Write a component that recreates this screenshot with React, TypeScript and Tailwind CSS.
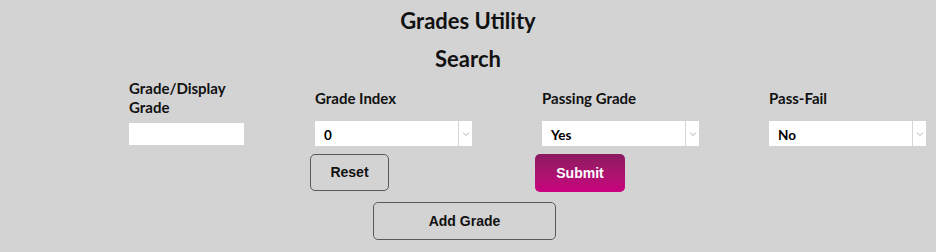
import React from 'react';

const Chevron = () => (
  <svg width="8" height="6" viewBox="0 0 8 6" fill="none" stroke="#b0b0b0" strokeWidth={1}>
    <path d="M1 1.5l3 3 3-3" />
  </svg>
);

const SelectBox = ({ value }: { value: string }) => (
  <div className="flex h-[25px] w-[157px] bg-white">
    <div className="flex flex-1 items-center pl-[9px] pt-[3px] text-[13.5px] font-bold text-black">{value}</div>
    <div className="flex w-[14px] items-center justify-center border-l border-[#d6d6d6]">
      <Chevron />
    </div>
  </div>
);

export default function App() {
  return (
    <div className="h-[252px] w-[936px] bg-[#d3d3d3] font-['Lato',sans-serif] text-[#111]">
      <h1 className="pt-[9px] text-center text-[22px] font-bold leading-[24px]">Grades Utility</h1>
      <h2 className="mt-[14px] text-center text-[22px] font-bold leading-[24px]">Search</h2>

      <div className="mt-[6px] grid grid-cols-[186px_227px_227px_157px] grid-rows-[40px_33px] items-center pl-[129px] text-[15px] font-bold leading-[19px]">
        <label className="mt-[1px]">
          Grade/Display
          <br />
          Grade
        </label>
        <label className="pt-[2px]">Grade Index</label>
        <label className="pt-[2px]">Passing Grade</label>
        <label className="pt-[2px]">Pass-Fail</label>

        <div className="h-[22px] w-[115px] bg-white" />
        <SelectBox value="0" />
        <SelectBox value="Yes" />
        <SelectBox value="No" />
      </div>

      <div className="mt-[4px] flex font-['Liberation_Sans',sans-serif] text-[14px] font-bold">
        <button className="ml-[310px] h-[37px] w-[79px] rounded-[5px] border border-[#5a5a5a] text-[#111]">
          Reset
        </button>
        <button className="ml-[146px] h-[38px] w-[90px] rounded-[5px] bg-gradient-to-b from-[#8c1a60] to-[#c9007e] text-white">
          Submit
        </button>
      </div>
      <div className="mt-[10px] flex font-['Liberation_Sans',sans-serif] text-[14px] font-bold">
        <button className="ml-[373px] h-[38px] w-[183px] rounded-[5px] border border-[#5a5a5a] text-[#111]">
          Add Grade
        </button>
      </div>
    </div>
  );
}
